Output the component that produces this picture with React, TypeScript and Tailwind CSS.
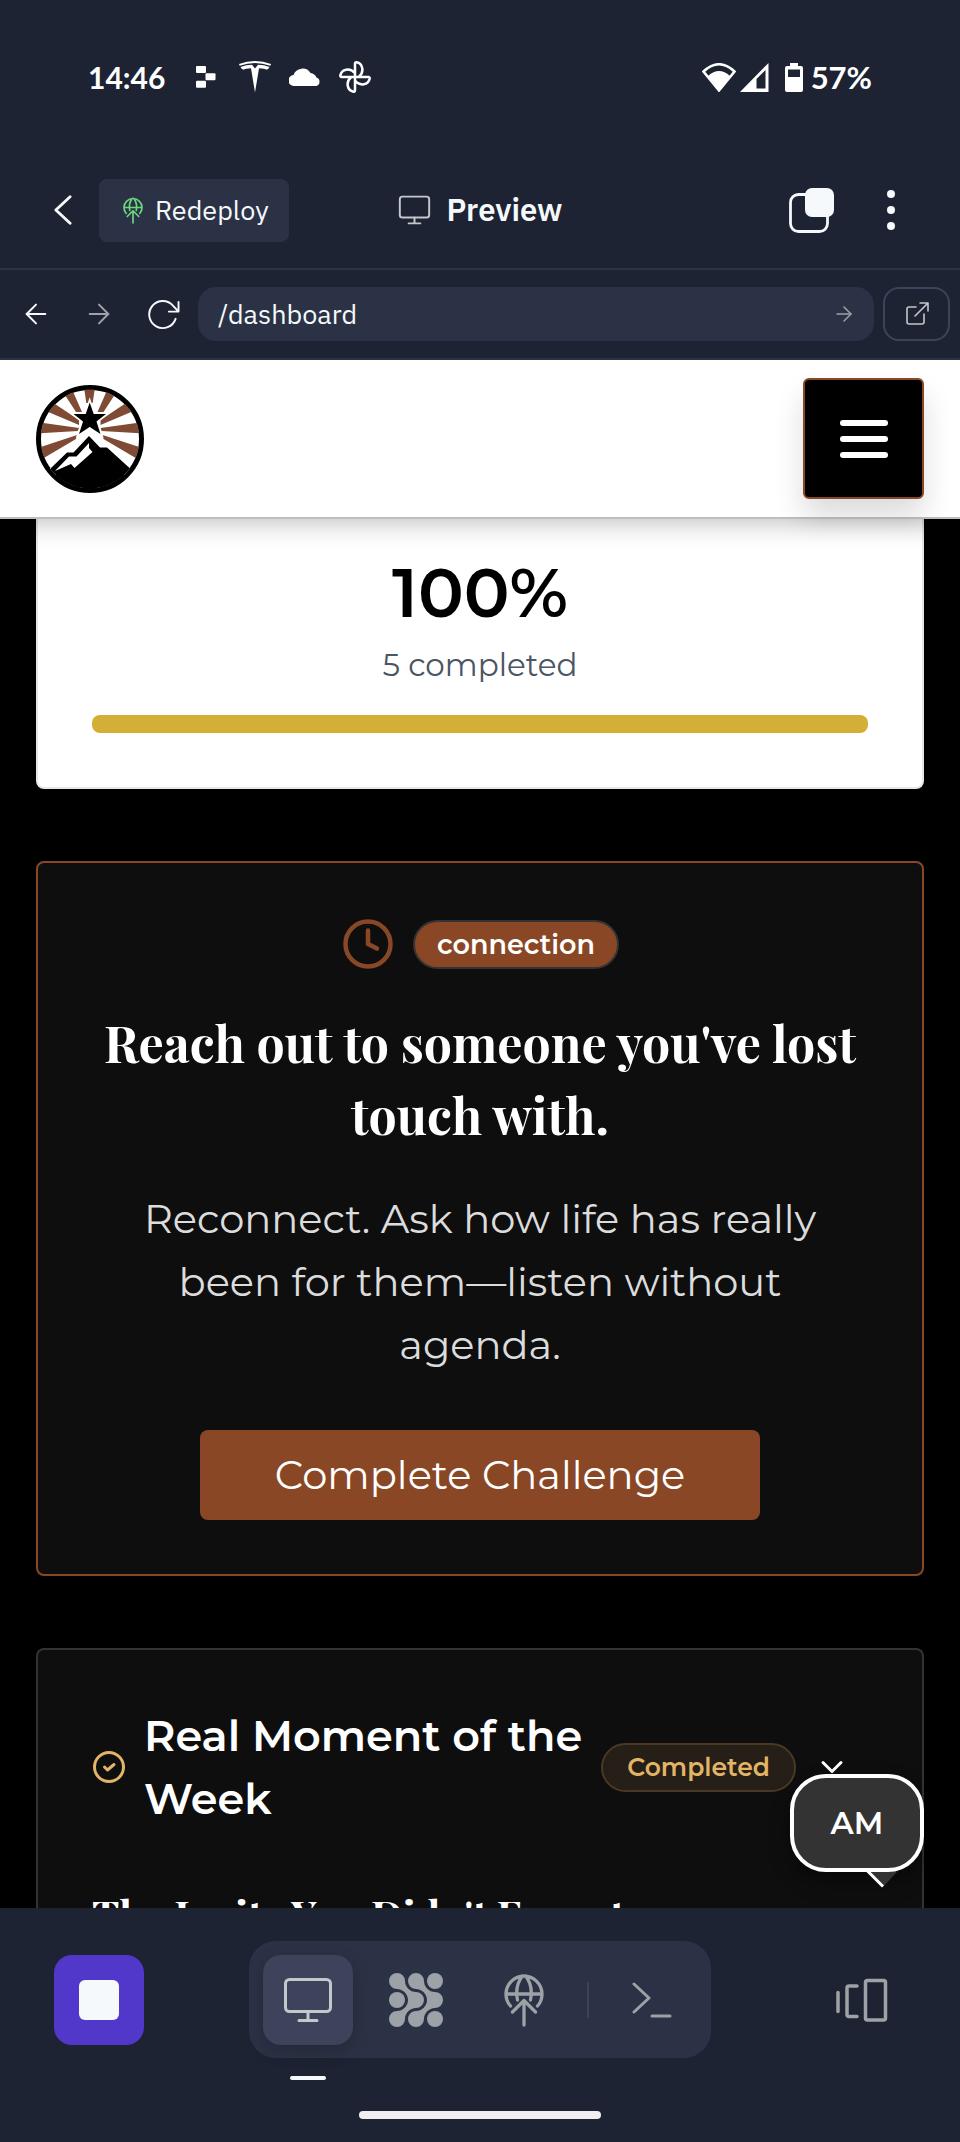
import type { ReactNode } from 'react'
import { ArrowLeft, ArrowRight, ChevronDown, Clock } from 'lucide-react'

type IconProps = { className?: string }

function MonitorIcon({ className }: IconProps) {
  return (
    <svg viewBox="0 0 50 46" className={className} fill="none" stroke="currentColor" strokeWidth="3" strokeLinecap="round">
      <rect x="2.5" y="2.5" width="45" height="32" rx="4" />
      <path d="M25 35v8M16 43.5h18" />
    </svg>
  )
}

function DeployIcon({ className }: IconProps) {
  return (
    <svg viewBox="0 0 40 54" className={className} fill="none" stroke="currentColor" strokeWidth="3.300" strokeLinecap="round" strokeLinejoin="round">
      <path d="M6.500 33a18 18 0 1 1 27 0M2 21h36M13.500 27c-2-10 0-18 5-24M26.500 27c2-10 0-18-5-24M20 52V27.500M8.500 39 20 27.500 31.500 39" />
    </svg>
  )
}

function ReloadIcon({ className }: IconProps) {
  return (
    <svg viewBox="0 0 34 32" className={className} fill="none" stroke="currentColor" strokeWidth="2" strokeLinecap="round" strokeLinejoin="round">
      <path d="M29.500 20.500A14 14 0 1 1 27 7l5 5.500M32.500 3v10H22.500" />
    </svg>
  )
}

function TeslaIcon({ className }: IconProps) {
  return (
    <svg viewBox="0 0 32 32" className={className} fill="currentColor">
      <path d="M0 3Q16-3 32 3L31.300 4.800Q16-.6 .7 4.800Z" />
      <path d="M1.500 6Q7 3.800 13 3.800L16 7.500 19 3.800Q25 3.800 30.500 6 29.500 8.600 27 8.800 26 7.300 20 7.300L16 31.500 12 7.300Q6 7.300 5 8.800 2.500 8.600 1.500 6Z" />
    </svg>
  )
}

function PinwheelIcon({ className }: IconProps) {
  const blade = 'M16 16V2.500A1.300 1.300 0 0 1 17.500 1.300C24 2.500 25.500 11 20 15.800'
  return (
    <svg viewBox="0 0 32 32" className={className} fill="none" stroke="currentColor" strokeWidth="2.500" strokeLinejoin="round">
      <path d={blade} />
      <path d={blade} transform="rotate(90 16 16)" />
      <path d={blade} transform="rotate(180 16 16)" />
      <path d={blade} transform="rotate(270 16 16)" />
    </svg>
  )
}

function CompanyLogo() {
  const rays = 'M25 4 35 2 46 27 40 27ZM10 13 3 23 43 40 43 35ZM0 37V48.500L42 46 43 43ZM0 63.500V77.500L40 54 41 50Z'
  return (
    <svg viewBox="0 0 108 108" className="size-27" role="img" aria-label="Mountain star logo">
      <defs>
        <clipPath id="badge">
          <circle cx="54" cy="54" r="49.500" />
        </clipPath>
      </defs>
      <circle cx="54" cy="54" r="51.500" fill="#fff" stroke="#000" strokeWidth="5" />
      <g clipPath="url(#badge)">
        <g fill="#7f4b35">
          <path d="M48 2H59L56.700 18H50.300Z" />
          <path d={rays} />
          <path d={rays} transform="translate(107.500 0) scale(-1 1)" />
        </g>
        <path
          d="M53.700 17.500 57.700 29H70L60.500 36.500 64.500 49 53.700 42 43 49 47 36.500 37.500 29H49.700Z"
          stroke="#fff"
          strokeWidth="3.500"
          style={{ paintOrder: 'stroke' }}
        />
        <path fill="#fff" d="M53.500 42 8 90H99L66 54 53.500 42Z" />
        <path d="M15 83 31 67.500H37.500L53 51 64 62.500H71L93 82.500V108H15Z" />
        <path fill="#fff" d="M19 86 33 71.500H40.500L53 58V63L56.500 67 38.500 83 35 79Z" />
      </g>
    </svg>
  )
}

function StatusBar() {
  return (
    <div className="flex h-[154px] items-center justify-between px-[88px] text-white">
      <div className="flex items-center">
        <span className="mr-[31px] font-['Google_Sans','Lato',sans-serif] text-[30px] font-bold">14:46</span>
        <svg viewBox="0 0 20 22" className="mr-[23px] h-[22px] w-5" fill="currentColor">
          <rect width="10" height="7" rx="1" />
          <rect x="9.500" y="7.300" width="10" height="7" rx="1" />
          <rect y="14.700" width="10" height="7" rx="1" />
        </svg>
        <TeslaIcon className="mr-[18px] size-8" />
        <svg viewBox="0 0 32 18" className="mr-[18px] h-[18px] w-8" fill="currentColor">
          <path d="M5.500 18A5.500 5.500 0 0 1 4.500 7 9.500 9.500 0 0 1 21.500 5 7.500 7.500 0 0 1 27.500 9.500 4.500 4.500 0 0 1 27.500 18Z" />
        </svg>
        <PinwheelIcon className="size-8" />
      </div>
      <div className="flex items-center">
        <svg viewBox="0 0 34 29" className="mr-1 h-[29px] w-[34px]">
          <path d="M1.500 8.500Q17-6 32.500 8.500L17 27.500Z" fill="none" stroke="currentColor" strokeWidth="2.500" />
          <path d="M6 13Q17 3 28 13L17 28Z" fill="currentColor" />
        </svg>
        <svg viewBox="0 0 29 29" className="mr-4 size-[29px]">
          <path fillRule="evenodd" fill="currentColor" d="M0 29 28.500 0V29ZM16.500 25.500H25.500V7L16.500 16Z" />
        </svg>
        <svg viewBox="0 0 18 29" className="mr-2 h-[29px] w-[18px]">
          <path
            fillRule="evenodd"
            fill="currentColor"
            d="M5 0H13V3H16Q18 3 18 5V27Q18 29 16 29H2Q0 29 0 27V5Q0 3 2 3H5ZM3 6.500V14H15V6.500Z"
          />
        </svg>
        <span className="font-['Google_Sans','Lato',sans-serif] text-[31px] font-bold">57%</span>
      </div>
    </div>
  )
}

function AppHeader() {
  return (
    <header className="grid h-[114px] grid-cols-[1fr_auto_1fr] items-center px-[53px] pb-0.5 text-[#f5f9fc]">
      <div className="flex items-center gap-[27px]">
        <button aria-label="Back">
          <svg viewBox="0 0 20 32" className="h-8 w-[19px]" fill="none" stroke="currentColor" strokeWidth="3" strokeLinecap="round" strokeLinejoin="round">
            <path d="M18 2 3 16 18 30" />
          </svg>
        </button>
        <button className="flex h-[63px] items-center gap-3 rounded-lg bg-[#2b3245] pr-5 pl-6 text-[27px]">
          <DeployIcon className="h-[27px] w-5 text-[#6cd97e]" />
          Redeploy
        </button>
      </div>
      <div className="flex items-center gap-4">
        <MonitorIcon className="h-[30px] w-[33px] text-[#c2c8cc]" />
        <h1 className="text-[31px] font-semibold">Preview</h1>
      </div>
      <div className="flex items-center justify-end gap-[49px] pr-2">
        <button aria-label="Windows">
          <svg viewBox="0 0 45 45" className="size-[45px]">
            <rect x="1.500" y="6.500" width="37" height="37" rx="8" fill="none" stroke="currentColor" strokeWidth="2.800" />
            <rect x="16" y="0" width="29" height="29" rx="7" fill="currentColor" />
          </svg>
        </button>
        <button aria-label="More options" className="flex w-4 flex-col items-center gap-2">
          <span className="size-2 rounded-full bg-current" />
          <span className="size-2 rounded-full bg-current" />
          <span className="size-2 rounded-full bg-current" />
        </button>
      </div>
    </header>
  )
}

function AddressBar() {
  return (
    <nav className="flex h-[92px] items-center border-y-2 border-[#2b3245] pr-2.5 pl-5 text-[#f5f9fc]">
      <button aria-label="Go back" className="mr-[31px]">
        <ArrowLeft className="size-8" strokeWidth={1.5} />
      </button>
      <button aria-label="Go forward" className="mr-8 text-[#9da2a6]">
        <ArrowRight className="size-8" strokeWidth={1.5} />
      </button>
      <button aria-label="Reload" className="mr-[18px]">
        <ReloadIcon className="h-[31px] w-[33px]" />
      </button>
      <div className="mr-[9px] flex h-[54px] flex-1 items-center rounded-[18px] bg-[#2b3245] pr-[18px] pl-5">
        <input aria-label="Path" defaultValue="/dashboard" className="min-w-0 flex-1 bg-transparent text-[27px] outline-none" />
        <button aria-label="Open path" className="text-[#9da2a6]">
          <ArrowRight className="size-6" strokeWidth={1.5} />
        </button>
      </div>
      <button aria-label="Open in new tab" className="flex h-[54px] w-[67px] items-center justify-center rounded-2xl border-2 border-[#3c435b] text-[#c2c8cc]">
        <svg viewBox="0 0 24 24" className="size-6" fill="none" stroke="currentColor" strokeWidth="1.600" strokeLinecap="round" strokeLinejoin="round">
          <path d="M11 5H4a2 2 0 0 0-2 2v13a2 2 0 0 0 2 2h13a2 2 0 0 0 2-2v-8M15 1h8v8M23 1 10 14" />
        </svg>
      </button>
    </nav>
  )
}

function SiteHeader() {
  return (
    <header className="relative z-10 flex items-center justify-between border-b-2 border-[#bfbfbf] bg-white px-9 py-[18px] shadow-[0_4px_24px_rgba(0,0,0,0.25)]">
      <CompanyLogo />
      <button
        aria-label="Open menu"
        className="flex size-[121px] items-center justify-center rounded-md border-2 border-[#8a4725] bg-black shadow-[0_18px_30px_rgba(0,0,0,0.14)]"
      >
        <span className="flex w-12 flex-col gap-2.5">
          <span className="h-1.5 rounded-full bg-white" />
          <span className="h-1.5 rounded-full bg-white" />
          <span className="h-1.5 rounded-full bg-white" />
        </span>
      </button>
    </header>
  )
}

function ProgressCard() {
  return (
    <section className="rounded-b-lg border-x-2 border-b-2 border-[#e5e7eb] bg-white px-[54px] pt-9 pb-[54px] text-center">
      <p className="text-[68px] leading-[76px] font-semibold text-black">100%</p>
      <p className="mt-3 mb-[27px] text-[31px] leading-[45px] text-[#4b5563]">5 completed</p>
      <div role="progressbar" aria-valuenow={100} className="h-[18px] rounded-lg bg-[#d3af37]" />
    </section>
  )
}

function ChallengeCard() {
  return (
    <section className="flex flex-col items-center rounded-lg border-2 border-[#8a4725] bg-[#0e0e0e] px-[54px] py-[54px] text-center text-white">
      <div className="flex items-center gap-[18px]">
        <Clock className="size-[54px] text-[#8a4725]" strokeWidth={2} />
        <span className="rounded-full border-2 border-[#333] bg-[#8a4725] px-[22px] text-[27px] leading-[45px] font-semibold">connection</span>
      </div>
      <h2 className="mt-9 font-['Playfair_Display','Liberation_Serif',serif] text-[50px] leading-[72px] font-bold">
        Reach out to someone you've lost touch with.
      </h2>
      <p className="mt-9 px-9 text-[40px] leading-[63px] text-[#dcdcdc]">
        Reconnect. Ask how life has really been for them—listen without agenda.
      </p>
      <button className="mt-[54px] h-[90px] w-[560px] rounded-lg bg-[#8a4725] text-[40px]">Complete Challenge</button>
    </section>
  )
}

function MomentCard() {
  return (
    <section className="rounded-t-lg border-2 border-b-0 border-[#333] bg-[#0e0e0e] px-[54px] pt-[54px] text-white">
      <div className="flex items-center">
        <svg viewBox="0 0 36 36" className="mr-4 size-9 shrink-0" fill="none" stroke="#e3b465" strokeWidth="3" strokeLinecap="round" strokeLinejoin="round">
          <circle cx="17" cy="18" r="14.500" />
          <path d="M12.500 18 15.500 21 22 15.500" />
        </svg>
        <h3 className="flex-1 text-[43px] leading-[63px] font-semibold">Real Moment of the Week</h3>
        <span className="rounded-full border-2 border-[#493924] bg-[#251f17] px-6 text-[25px] leading-[45px] font-semibold text-[#e3b465]">
          Completed
        </span>
        <button aria-label="Expand" className="mr-[18px] ml-[18px]">
          <ChevronDown className="size-9" strokeWidth={2} />
        </button>
      </div>
      <h4 className="mt-[54px] font-['Playfair_Display','Liberation_Serif',serif] text-[41px] leading-[60px] font-bold">The Invite You Didn't Expect</h4>
    </section>
  )
}

function ChatBubble() {
  return (
    <button className="absolute right-9 bottom-9 z-20 flex h-[98px] w-[134px] items-center justify-center rounded-[36px] border-4 border-white bg-[#333] text-[31px] font-semibold text-white shadow-[0_10px_20px_rgba(0,0,0,0.4)]">
      AM
      <svg viewBox="0 0 32 17" className="absolute top-[94px] right-[22px] h-[17px] w-8">
        <path d="M2 0H31L17 15Z" fill="#333" />
        <path d="M1.500-1 17 14.500" stroke="#fff" strokeWidth="3" />
      </svg>
    </button>
  )
}

function DotsIcon({ className }: IconProps) {
  return (
    <svg viewBox="0 0 54 54" className={className} fill="currentColor">
      <circle cx="46" cy="8" r="8" />
      <circle cx="8" cy="27" r="8" />
      <circle cx="46" cy="46" r="8" />
      <path d="M8 0A8 8 0 0 1 16 8C16 14 21 19 27 19A8 8 0 0 1 27 35C21 35 16 40 16 46A8 8 0 1 1 8 38C14 38 19 33 19 27C19 21 14 16 8 16A8 8 0 1 1 8 0Z" />
      <path d="M27 0A8 8 0 0 1 35 8C35 14 40 19 46 19A8 8 0 0 1 46 35C40 35 35 40 35 46A8 8 0 1 1 27 38C33 38 38 33 38 27C38 21 33 16 27 16A8 8 0 1 1 27 0Z" />
    </svg>
  )
}

function TabButton({ label, active, children }: { label: string; active?: boolean; children: ReactNode }) {
  return (
    <button
      aria-label={label}
      className={
        active
          ? 'flex size-[90px] items-center justify-center rounded-[18px] bg-[#3c435b] text-[#c2c8cc] shadow-[0_6px_18px_rgba(0,0,0,0.18)]'
          : 'flex size-[90px] items-center justify-center rounded-[18px] text-[#9da2a6]'
      }
    >
      {children}
    </button>
  )
}

function BottomBar() {
  return (
    <footer className="flex h-[234px] flex-col bg-[#1d2332] pt-[33px]">
      <div className="grid grid-cols-[1fr_auto_1fr] items-center px-[54px]">
        <button aria-label="Stop" className="flex size-[90px] items-center justify-center rounded-[18px] bg-[#5138ca]">
          <span className="size-10 rounded-md bg-[#f5f9fc]" />
        </button>
        <div className="relative flex h-[117px] items-center gap-[18px] rounded-[27px] bg-[#2b3245] px-[14px]">
          <TabButton label="Preview" active>
            <MonitorIcon className="h-[46px] w-[50px]" />
          </TabButton>
          <TabButton label="Agent">
            <DotsIcon className="size-[54px]" />
          </TabButton>
          <TabButton label="Deploy">
            <DeployIcon className="h-[54px] w-10" />
          </TabButton>
          <span className="h-9 w-0.5 bg-[#3c435b]" />
          <TabButton label="Shell">
            <svg viewBox="0 0 40 36" className="h-9 w-10" fill="none" stroke="currentColor" strokeWidth="3" strokeLinecap="round" strokeLinejoin="round">
              <path d="M2 2 17 16 2 30M20 34H38" />
            </svg>
          </TabButton>
          <span className="absolute -bottom-[22px] left-[41px] h-1 w-9 rounded-full bg-[#f5f9fc]" />
        </div>
        <button aria-label="Switch panels" className="mr-[18px] justify-self-end text-[#9da2a6]">
          <svg viewBox="0 0 52 44" className="h-11 w-[52px]" fill="none" stroke="currentColor" strokeWidth="3.500" strokeLinecap="round" strokeLinejoin="round">
            <path d="M2 14.500V33.500M21 8H13a2 2 0 0 0-2 2V36.500a2 2 0 0 0 2 2H21" />
            <rect x="29.500" y="2.500" width="20" height="39.500" rx="2" />
          </svg>
        </button>
      </div>
      <span className="mx-auto mt-[53px] h-2 w-[242px] rounded-full bg-[#efefef]" />
    </footer>
  )
}

export default function App() {
  return (
    <div className="flex h-screen flex-col bg-[#1d2332] font-['IBM_Plex_Sans','Noto_Sans',sans-serif]">
      <StatusBar />
      <AppHeader />
      <AddressBar />
      <div className="relative flex min-h-0 flex-1 flex-col overflow-hidden bg-black font-['Montserrat','Inter',sans-serif]">
        <SiteHeader />
        <main className="flex min-h-0 flex-1 flex-col gap-[72px] px-9 *:shrink-0">
          <ProgressCard />
          <ChallengeCard />
          <MomentCard />
        </main>
        <ChatBubble />
      </div>
      <BottomBar />
    </div>
  )
}
